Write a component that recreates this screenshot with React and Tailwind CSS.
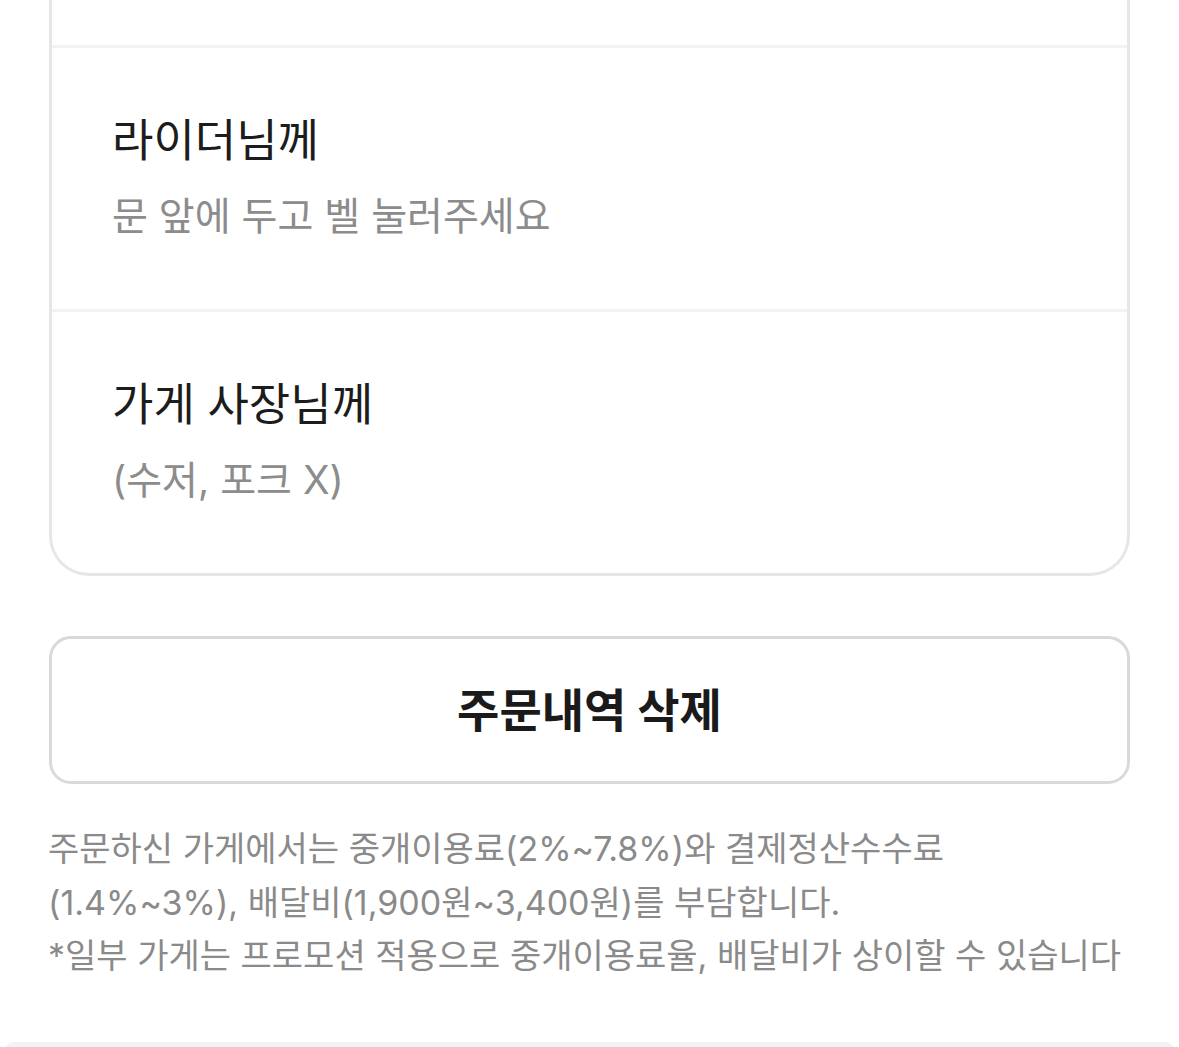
import React from "react";

const notes = [
  { title: "라이더님께", body: "문 앞에 두고 벨 눌러주세요" },
  { title: "가게 사장님께", body: "(수저, 포크 X)" },
];

function NoteRow({ title, body, last }) {
  return (
    <div
      className={
        "px-[60px] pt-[65px] pb-[67px] " +
        (last ? "" : "border-b-[3px] border-[#f2f2f3]")
      }
    >
      <div className="text-[45px] leading-[56px] text-[#1c1c1c]">{title}</div>
      <div className="mt-[21px] text-[39px] leading-[52px] text-[#8c8c8c]">{body}</div>
    </div>
  );
}

export default function App() {
  return (
    <div className="min-h-[1047px] bg-white font-['Inter','Noto_Sans_CJK_KR',sans-serif] overflow-hidden">
      {/* 위쪽은 잘린 카드 */}
      <div className="mx-[49px] border-[3px] border-t-0 border-[#e6e6e8] rounded-b-[40px] bg-white">
        <div className="h-[48px] border-b-[3px] border-[#f2f2f3]" />
        {notes.map((n, i) => (
          <NoteRow key={n.title} title={n.title} body={n.body} last={i === notes.length - 1} />
        ))}
      </div>

      <button className="mx-[49px] mt-[60px] w-[1081px] h-[148px] flex items-center justify-center border-[3px] border-[#d9d9d9] rounded-[22px] bg-white">
        <span className="text-[46px] font-bold text-[#1a1a1a]">주문내역 삭제</span>
      </button>

      <div className="mx-[48px] mt-[38px] text-[34px] leading-[53.5px] text-[#8a8a8a]">
        <p>주문하신 가게에서는 중개이용료(2%~7.8%)와 결제정산수수료</p>
        <p>(1.4%~3%), 배달비(1,900원~3,400원)를 부담합니다.</p>
        <p>*일부 가게는 프로모션 적용으로 중개이용료율, 배달비가 상이할 수 있습니다</p>
      </div>

      <div className="mx-[4px] mt-[59px] h-[12px] rounded-t-[10px] bg-[#f2f2f3]" />
    </div>
  );
}
